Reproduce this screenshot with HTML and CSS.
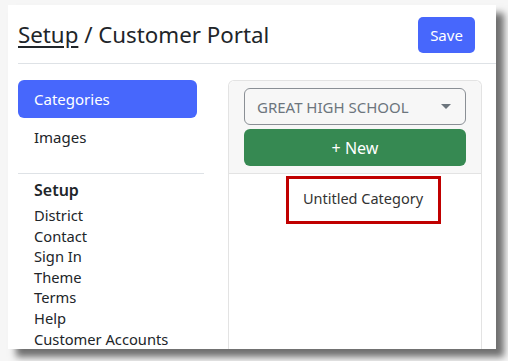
FILE: index.html
```html
<!DOCTYPE html>
<html lang="en">
<head>
  <meta charset="UTF-8" />
  <title>Setup - Customer Portal</title>
  <link rel="stylesheet" href="styles.css">
</head>
<body>
  <div class="card">
    <div class="header">
      <h1><a href="#">Setup</a> / Customer Portal</h1>
      <button class="save">Save</button>
    </div>

    <div class="content">
      <div class="sidebar">
        <a class="nav-item active" href="#">Categories</a>
        <a class="nav-item" href="#">Images</a>
        <div class="group">
          <div class="group-title">Setup</div>
          <a class="link" href="#">District</a>
          <a class="link" href="#">Contact</a>
          <a class="link" href="#">Sign In</a>
          <a class="link" href="#">Theme</a>
          <a class="link" href="#">Terms</a>
          <a class="link" href="#">Help</a>
          <a class="link" href="#">Customer Accounts</a>
        </div>
      </div>

      <div class="panel">
        <div class="panel-head">
          <div class="select">
            <span>GREAT HIGH SCHOOL</span>
            <span class="caret"></span>
          </div>
          <button class="new-btn">+ New</button>
        </div>
        <div class="panel-body">
          <div class="category">Untitled Category</div>
        </div>
      </div>
    </div>
  </div>
</body>
</html>
```

FILE: styles.css
```css
* {
  margin: 0;
  padding: 0;
  box-sizing: border-box;
}
body {
  background-color: #f6f6f6;
  font-family: "Noto Sans", "Open Sans", sans-serif;
  color: #212529;
  width: 508px;
  height: 361px;
  overflow: hidden;
}
a {
  color: inherit;
  text-decoration: none;
}
button {
  font-family: inherit;
  border: none;
  cursor: pointer;
}
.card {
  margin: 5px 0 0 8px;
  width: 488px;
  height: 344px;
  background-color: #fff;
  padding-left: 10px;
  overflow: hidden;
  box-shadow: 8px 8px 7px rgba(0,0,0,0.55);
}
.header {
  display: flex;
  justify-content: space-between;
  align-items: flex-start;
  padding: 12px 21px 0 0;
  height: 59px;
  border-bottom: 1px solid #dee2e6;
}
.header h1 {
  font-size: 22.3px;
  font-weight: 400;
  line-height: 38px;
  margin-top: -1px;
}
.header h1 a {
  text-decoration: underline;
  text-underline-offset: 3px;
}
.save {
  width: 57px;
  height: 36px;
  background-color: #4767fc;
  color: #fff;
  font-size: 15px;
  border-radius: 5px;
}
.content {
  display: flex;
  gap: 24px;
  padding-top: 16px;
}
.sidebar {
  width: 186px;
}
.nav-item {
  display: block;
  height: 38px;
  line-height: 38px;
  padding-left: 16px;
  margin-right: 7px;
  font-size: 15px;
  border-radius: 6px;
}
.nav-item.active {
  background-color: #4767fc;
  color: #fff;
}
.group {
  margin-top: 17px;
  border-top: 1px solid #dee2e6;
  padding: 4px 0 0 16px;
}
.group-title {
  font-size: 16px;
  font-weight: 600;
  line-height: 25px;
  margin-bottom: 2px;
}
.link {
  display: block;
  font-size: 14.7px;
  line-height: 20.6px;
}
.panel {
  width: 254px;
  height: 280px;
  border: 1px solid #e3e3e3;
  border-bottom: none;
  border-radius: 6px 6px 0 0;
}
.panel-head {
  background-color: #f7f7f7;
  padding: 7px 15px 7px 15px;
  border-bottom: 1px solid #e3e3e3;
  border-radius: 6px 6px 0 0;
}
.select {
  display: flex;
  justify-content: space-between;
  align-items: center;
  height: 37px;
  padding: 0 12px;
  border: 1px solid #8a8f95;
  border-radius: 6px;
  background-color: #f7f7f7;
  color: #6c757d;
  font-size: 15px;
}
.caret {
  width: 0;
  height: 0;
  border-left: 5px solid transparent;
  border-right: 5px solid transparent;
  border-top: 5px solid #6c757d;
  margin-right: 2px;
}
.new-btn {
  display: block;
  width: 100%;
  height: 37px;
  margin-top: 4px;
  background-color: #368952;
  color: #fff;
  font-size: 16px;
  border-radius: 6px;
}
.panel-body {
  display: flex;
  justify-content: center;
  padding-top: 2px;
}
.category {
  width: 155px;
  height: 48px;
  border: 3px solid #c00000;
  font-size: 14.5px;
  line-height: 39px;
  text-align: center;
  color: #333;
  margin-left: 16px;
}
```
